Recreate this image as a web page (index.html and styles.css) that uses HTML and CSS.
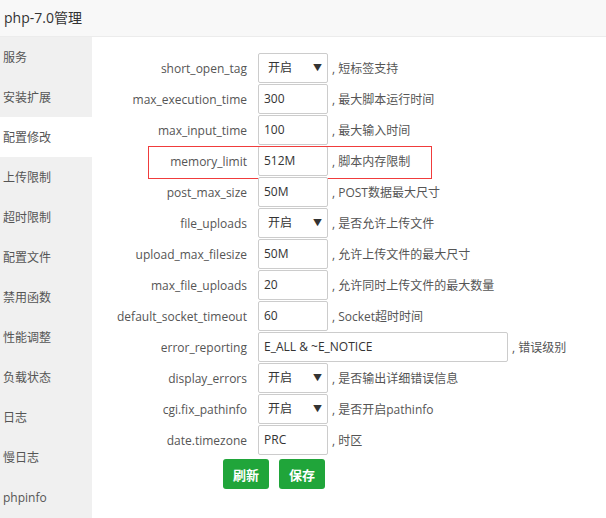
FILE: index.html
```html
<!DOCTYPE html>
<html lang="zh-CN">
<head>
<meta charset="utf-8">
<title>php-7.0管理</title>
<link rel="stylesheet" href="styles.css">
</head>
<body>
<div class="header">php-7.0管理</div>
<div class="layout">
  <ul class="sidebar">
    <li>服务</li>
    <li>安装扩展</li>
    <li class="active">配置修改</li>
    <li>上传限制</li>
    <li>超时限制</li>
    <li>配置文件</li>
    <li>禁用函数</li>
    <li>性能调整</li>
    <li>负载状态</li>
    <li>日志</li>
    <li>慢日志</li>
    <li>phpinfo</li>
  </ul>
  <div class="main">
    <div class="row"><span class="label">short_open_tag</span><span class="sel">开启</span><span class="note">, 短标签支持</span></div>
    <div class="row"><span class="label">max_execution_time</span><span class="inp">300</span><span class="note">, 最大脚本运行时间</span></div>
    <div class="row"><span class="label">max_input_time</span><span class="inp">100</span><span class="note">, 最大输入时间</span></div>
    <div class="row"><span class="label">memory_limit</span><span class="inp">512M</span><span class="note">, 脚本内存限制</span><span class="mark"></span></div>
    <div class="row"><span class="label">post_max_size</span><span class="inp">50M</span><span class="note">, POST数据最大尺寸</span></div>
    <div class="row"><span class="label">file_uploads</span><span class="sel">开启</span><span class="note">, 是否允许上传文件</span></div>
    <div class="row"><span class="label">upload_max_filesize</span><span class="inp">50M</span><span class="note">, 允许上传文件的最大尺寸</span></div>
    <div class="row"><span class="label">max_file_uploads</span><span class="inp">20</span><span class="note">, 允许同时上传文件的最大数量</span></div>
    <div class="row"><span class="label">default_socket_timeout</span><span class="inp">60</span><span class="note">, Socket超时时间</span></div>
    <div class="row"><span class="label">error_reporting</span><span class="inp wide">E_ALL &amp; ~E_NOTICE</span><span class="note">, 错误级别</span></div>
    <div class="row"><span class="label">display_errors</span><span class="sel">开启</span><span class="note">, 是否输出详细错误信息</span></div>
    <div class="row"><span class="label">cgi.fix_pathinfo</span><span class="sel">开启</span><span class="note">, 是否开启pathinfo</span></div>
    <div class="row"><span class="label">date.timezone</span><span class="inp">PRC</span><span class="note">, 时区</span></div>
    <div class="buttons"><button class="btn">刷新</button><button class="btn">保存</button></div>
  </div>
</div>
</body>
</html>
```

FILE: styles.css
```css
* { box-sizing: border-box; }
html, body { margin: 0; padding: 0; background: #fff; }
body {
  font-family: "Open Sans", "Noto Sans CJK SC", sans-serif;
  font-size: 12px;
  color: #555;
}
.header {
  height: 37px;
  line-height: 36px;
  padding-left: 4px;
  font-size: 14px;
  color: #333;
  background: #f8f8f8;
  border-bottom: 1px solid #ececec;
}
.layout { display: flex; }
.sidebar {
  list-style: none;
  margin: 0;
  padding: 0;
  width: 92px;
  background: #f0f0f0;
  height: 481px;
}
.sidebar li {
  height: 40px;
  line-height: 38px;
  padding-top: 2px;
  padding-left: 3px;
  color: #555;
}
.sidebar li.active { background: #fff; }
.main { flex: 1; padding-top: 16px; }
.row {
  position: relative;
  display: flex;
  align-items: center;
  height: 30px;
  margin-bottom: 1px;
}
.label {
  width: 155px;
  text-align: right;
  margin-right: 11px;
  white-space: nowrap;
}
.inp, .sel {
  position: relative;
  width: 70px;
  height: 30px;
  line-height: 28px;
  border: 1px solid #ccc;
  border-radius: 2px;
  padding-left: 5px;
  color: #333;
  background: #fff;
}
.inp.wide { width: 250px; }
.sel { padding-left: 9px; }
.sel::after {
  content: "▼";
  position: absolute;
  right: 5px;
  top: 0;
  font-size: 9px;
  color: #333;
}
.note { margin-left: 4px; white-space: nowrap; }
.mark {
  position: absolute;
  left: 56px;
  top: 0;
  width: 284px;
  height: 33px;
  border: 1px solid #f03c3c;
}
.buttons {
  display: flex;
  gap: 10px;
  padding-left: 131px;
  margin-top: 4px;
}
.btn {
  width: 46px;
  height: 30px;
  border: 0;
  border-radius: 3px;
  background: #20a53a;
  color: #fff;
  font-family: "Open Sans", "Noto Sans CJK SC", sans-serif;
  font-size: 13px;
  font-weight: bold;
  padding: 0;
}
```
